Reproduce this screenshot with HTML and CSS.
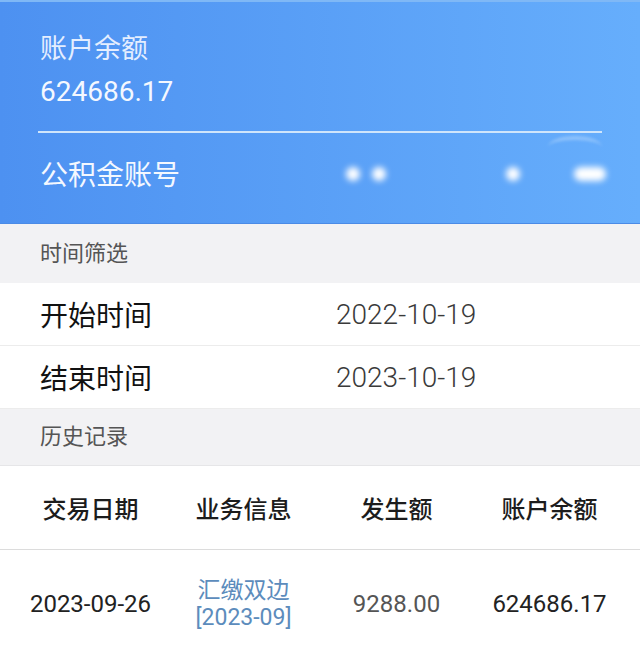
FILE: index.html
```html
<!DOCTYPE html>
<html lang="zh-CN">
<head>
    <meta charset="UTF-8">
    <meta name="viewport" content="width=device-width, initial-scale=1.0">
    <title>公积金账户</title>
    <link rel="stylesheet" href="styles.css">
</head>
<body>
    <header class="account">
        <div class="balance-label">账户余额</div>
        <div class="balance-value">624686.17</div>
        <div class="divider"></div>
        <span class="glare"></span>
        <div class="account-row">
            <span class="account-label">公积金账号</span>
            <span class="mask">
                <i class="dot d1"></i>
                <i class="dot d2"></i>
                <i class="dot d3"></i>
                <i class="dot pill"></i>
            </span>
        </div>
    </header>

    <div class="section-title">时间筛选</div>
    <div class="filter-row">
        <span class="filter-label">开始时间</span>
        <span class="filter-date">2022-10-19</span>
    </div>
    <div class="filter-row">
        <span class="filter-label">结束时间</span>
        <span class="filter-date">2023-10-19</span>
    </div>

    <div class="section-title history">历史记录</div>
    <div class="records">
        <div class="record-head">
            <span>交易日期</span>
            <span>业务信息</span>
            <span>发生额</span>
            <span>账户余额</span>
        </div>
        <div class="record">
            <span class="date">2023-09-26</span>
            <span class="info">汇缴双边<br>[2023-09]</span>
            <span class="amount">9288.00</span>
            <span class="balance">624686.17</span>
        </div>
    </div>
</body>
</html>
```

FILE: styles.css
```css
* {
    margin: 0;
    padding: 0;
    box-sizing: border-box;
}

body {
    font-family: Roboto, 'Noto Sans CJK SC', sans-serif;
    background-color: #fff;
    color: #222;
    width: 640px;
    overflow: hidden;
}

.account {
    position: relative;
    height: 224px;
    padding: 30px 38px 0 40px;
    background: linear-gradient(to right, #4d91f1, #66aefc);
    border-top: 2px solid #7fb8f6;
    border-bottom: 1px solid #4b8be6;
    color: #eef4ff;
}

.balance-label {
    font-size: 27px;
    line-height: 34px;
    color: #e4eeff;
}

.balance-value {
    margin-top: 8px;
    font-size: 28px;
    line-height: 36px;
    color: #f4f8ff;
}

.divider {
    margin: 21px 0 0 -2px;
    height: 2px;
    background-color: #cfe5fb;
}

.glare {
    position: absolute;
    left: 548px;
    top: 134px;
    width: 54px;
    height: 22px;
    border-radius: 50%;
    border-top: 4px solid rgba(220, 238, 255, 0.35);
    filter: blur(1.5px);
}

.account-row {
    display: flex;
    align-items: center;
    padding-top: 24px;
    height: 62px;
}

.account-label {
    flex-shrink: 0;
    white-space: nowrap;
    font-size: 28px;
    line-height: 36px;
    color: #f4f8ff;
}

.mask {
    display: flex;
    align-items: center;
    margin-top: -4px;
}

.dot {
    display: block;
    flex-shrink: 0;
    width: 14px;
    height: 14px;
    border-radius: 50%;
    background-color: #fff;
    filter: blur(3px);
}

.d1 { margin-left: 166px; }
.d2 { margin-left: 12px; }
.d3 { margin-left: 120px; }

.pill {
    margin-left: 54px;
    width: 32px;
    height: 14px;
    border-radius: 7px;
}

.section-title {
    height: 59px;
    padding-left: 40px;
    background-color: #f2f2f4;
    font-size: 22px;
    line-height: 59px;
    color: #555;
}

.section-title.history {
    height: 56px;
    line-height: 56px;
}

.filter-row {
    display: flex;
    align-items: center;
    height: 63px;
    padding-left: 40px;
    border-bottom: 1px solid #ececec;
}

.filter-row:last-of-type {
    border-bottom: none;
}

.filter-label {
    width: 296px;
    font-size: 28px;
    color: #111;
}

.filter-date {
    font-size: 28px;
    font-weight: 300;
    color: #3a3a3a;
}

.records {
    padding: 0 14px;
    border-top: 1px solid #e6e6e8;
}

.record-head,
.record {
    display: grid;
    grid-template-columns: repeat(4, 1fr);
    align-items: center;
    text-align: center;
}

.record-head {
    height: 84px;
    margin: 0 -14px;
    padding: 0 14px;
    border-bottom: 1px solid #dcdcdc;
    font-size: 24px;
    font-weight: 500;
    color: #1c1c1c;
}

.record {
    height: 108px;
    font-size: 24px;
    color: #222;
}

.record .info {
    font-size: 23px;
    line-height: 27px;
    color: #5c8cbc;
}

.record .amount {
    color: #555;
}
```
